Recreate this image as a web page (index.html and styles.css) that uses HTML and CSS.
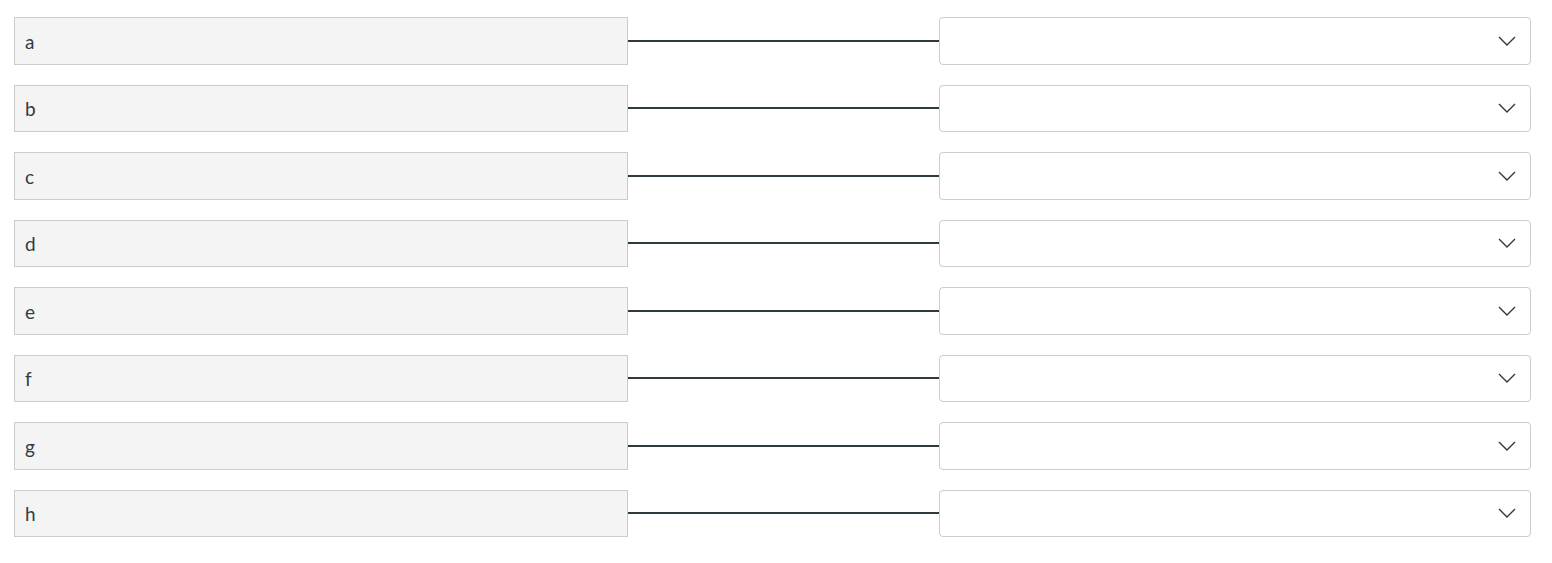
FILE: index.html
```html
<!DOCTYPE html>
<html>
<head>
<meta charset="utf-8">
<link rel="stylesheet" href="styles.css">
</head>
<body>
<div class="matching">
  <div class="row"><div class="term">a</div><div class="connector"></div><div class="select"><svg class="chev" viewBox="0 0 18 10"><path d="M1 1 L9 9 L17 1"/></svg></div></div>
  <div class="row"><div class="term">b</div><div class="connector"></div><div class="select"><svg class="chev" viewBox="0 0 18 10"><path d="M1 1 L9 9 L17 1"/></svg></div></div>
  <div class="row"><div class="term">c</div><div class="connector"></div><div class="select"><svg class="chev" viewBox="0 0 18 10"><path d="M1 1 L9 9 L17 1"/></svg></div></div>
  <div class="row"><div class="term">d</div><div class="connector"></div><div class="select"><svg class="chev" viewBox="0 0 18 10"><path d="M1 1 L9 9 L17 1"/></svg></div></div>
  <div class="row"><div class="term">e</div><div class="connector"></div><div class="select"><svg class="chev" viewBox="0 0 18 10"><path d="M1 1 L9 9 L17 1"/></svg></div></div>
  <div class="row"><div class="term">f</div><div class="connector"></div><div class="select"><svg class="chev" viewBox="0 0 18 10"><path d="M1 1 L9 9 L17 1"/></svg></div></div>
  <div class="row"><div class="term">g</div><div class="connector"></div><div class="select"><svg class="chev" viewBox="0 0 18 10"><path d="M1 1 L9 9 L17 1"/></svg></div></div>
  <div class="row"><div class="term">h</div><div class="connector"></div><div class="select"><svg class="chev" viewBox="0 0 18 10"><path d="M1 1 L9 9 L17 1"/></svg></div></div>
</div>
</body>
</html>
```
FILE: styles.css
```css
html, body {
  margin: 0;
  padding: 0;
  background: #ffffff;
}
body {
  font-family: Lato, "Liberation Sans", sans-serif;
  color: #333b40;
  font-size: 19px;
}
.matching {
  padding: 17px 0 0 14px;
  display: flex;
  flex-direction: column;
  gap: 20px;
}
.row {
  display: grid;
  grid-template-columns: 614px 311px 592px;
  height: 47.5px;
  align-items: center;
}
.term {
  box-sizing: border-box;
  height: 100%;
  background: #f4f4f4;
  border: 1px solid #c7cdd1;
  padding-left: 10px;
  padding-top: 1px;
  display: flex;
  align-items: center;
  line-height: 1;
}
.connector {
  height: 2px;
  background: #2d3b40;
}
.select {
  box-sizing: border-box;
  height: 100%;
  background: #fff;
  border: 1px solid #c7cdd1;
  border-radius: 4px;
  display: flex;
  align-items: center;
  justify-content: flex-end;
  padding-right: 14px;
}
.chev {
  width: 18px;
  height: 10px;
  fill: none;
  stroke: #2d3b40;
  stroke-width: 1.4;
}
```
